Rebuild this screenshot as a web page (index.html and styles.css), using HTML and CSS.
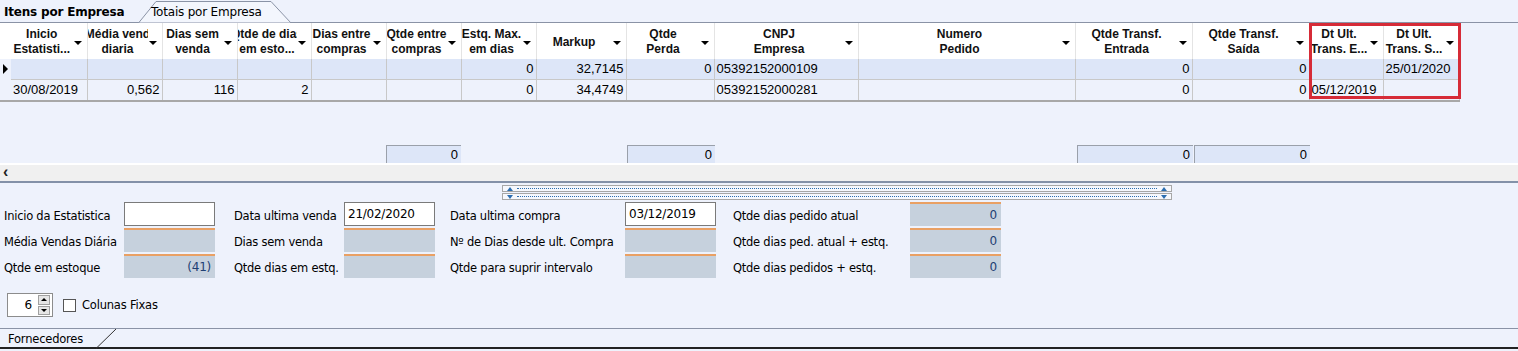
FILE: index.html
```html
<!DOCTYPE html>
<html lang="pt">
<head>
  <meta charset="UTF-8">
  <title>Itens por Empresa</title>
  <link rel="stylesheet" href="styles.css">
</head>
<body>

<div class="tabs">
  <div class="tab tab-active">Itens por Empresa</div>
  <div class="tab tab-other">
    <svg class="tab-shape" width="156" height="23" viewBox="0 0 156 23">
      <polygon points="0.5,23 18,1.5 133,1.5 153,23" fill="#f3f6fd" stroke="#8a93a6" stroke-width="1"/>
    </svg>
    <span>Totais por Empresa</span>
  </div>
</div>

<div class="grid-wrap">
  <table class="grid">
    <colgroup>
      <col style="width:11px"><col style="width:76px"><col style="width:75px"><col style="width:75px">
      <col style="width:74px"><col style="width:75px"><col style="width:75px"><col style="width:75px">
      <col style="width:90px"><col style="width:88px"><col style="width:144px"><col style="width:217px">
      <col style="width:117px"><col style="width:117px"><col style="width:74px"><col style="width:76px">
    </colgroup>
    <thead>
      <tr>
        <th class="ind"></th>
        <th><span>Inicio<br>Estatisti...</span></th>
        <th><span class="clip"><span>Média vend</span><span>diaria</span></span></th>
        <th><span>Dias sem<br>venda</span></th>
        <th><span class="clip"><span>Qtde de dias</span><span>em esto...</span></span></th>
        <th><span>Dias entre<br>compras</span></th>
        <th><span>Qtde entre<br>compras</span></th>
        <th><span>Estq. Max.<br>em dias</span></th>
        <th><span>Markup</span></th>
        <th><span>Qtde<br>Perda</span></th>
        <th><span>CNPJ<br>Empresa</span></th>
        <th><span>Numero<br>Pedido</span></th>
        <th><span>Qtde Transf.<br>Entrada</span></th>
        <th><span>Qtde Transf.<br>Saída</span></th>
        <th><span>Dt Ult.<br>Trans. E...</span></th>
        <th><span>Dt Ult.<br>Trans. S...</span></th>
      </tr>
    </thead>
    <tbody>
      <tr class="row-current">
        <td class="ind"><span class="pointer"></span></td>
        <td></td><td></td><td></td><td></td><td></td><td></td>
        <td class="num">0</td>
        <td class="num">32,7145</td>
        <td class="num">0</td>
        <td>05392152000109</td>
        <td></td>
        <td class="num">0</td>
        <td class="num">0</td>
        <td></td>
        <td>25/01/2020</td>
      </tr>
      <tr>
        <td class="ind"></td>
        <td>30/08/2019</td>
        <td class="num">0,562</td>
        <td class="num">116</td>
        <td class="num">2</td>
        <td></td><td></td>
        <td class="num">0</td>
        <td class="num">34,4749</td>
        <td></td>
        <td>05392152000281</td>
        <td></td>
        <td class="num">0</td>
        <td class="num">0</td>
        <td>05/12/2019</td>
        <td></td>
      </tr>
    </tbody>
  </table>

  <div class="mark"></div>

  <div class="totals">
    <div class="tot-gap" style="width:386px"></div>
    <div class="tot" style="width:75px">0</div>
    <div class="tot-gap" style="width:165px"></div>
    <div class="tot" style="width:88px">0</div>
    <div class="tot-gap" style="width:361px"></div>
    <div class="tot" style="width:116px">0</div>
    <div class="tot" style="width:116px">0</div>
  </div>
</div>

<div class="hscroll"><span class="arrow-left">&lsaquo;</span></div>

<div class="panel">
  <div class="splitter">
    <div class="split-bar"><span class="tri up"></span><span class="dots"></span><span class="tri up"></span></div>
    <div class="split-bar"><span class="tri down"></span><span class="dots"></span><span class="tri down"></span></div>
  </div>

  <div class="fields">
    <div class="fcol c1">
      <div class="frow"><label>Inicio da Estatistica</label><div class="box white"></div></div>
      <div class="frow"><label>Média Vendas Diária</label><div class="box ro"></div></div>
      <div class="frow"><label>Qtde em estoque</label><div class="box ro val">(41)</div></div>
    </div>
    <div class="fcol c2">
      <div class="frow"><label>Data ultima venda</label><div class="box white">21/02/2020</div></div>
      <div class="frow"><label>Dias sem venda</label><div class="box ro"></div></div>
      <div class="frow"><label>Qtde dias em estq.</label><div class="box ro"></div></div>
    </div>
    <div class="fcol c3">
      <div class="frow"><label>Data ultima compra</label><div class="box white">03/12/2019</div></div>
      <div class="frow"><label>Nº de Dias desde ult. Compra</label><div class="box ro"></div></div>
      <div class="frow"><label>Qtde para suprir intervalo</label><div class="box ro"></div></div>
    </div>
    <div class="fcol c4">
      <div class="frow"><label>Qtde dias pedido atual</label><div class="box ro val">0</div></div>
      <div class="frow"><label>Qtde dias ped. atual + estq.</label><div class="box ro val">0</div></div>
      <div class="frow"><label>Qtde dias pedidos + estq.</label><div class="box ro val">0</div></div>
    </div>
  </div>

  <div class="options">
    <div class="spin">
      <span class="spin-val">6</span>
      <div class="spin-btns">
        <span class="sb"><span class="tri-s up"></span></span>
        <span class="sb"><span class="tri-s down"></span></span>
      </div>
    </div>
    <span class="check"></span>
    <span class="check-label">Colunas Fixas</span>
  </div>
</div>

<div class="bottom-tabs">
  <div class="btab">
    <span>Fornecedores</span>
    <svg class="btab-shape" width="22" height="21" viewBox="0 0 22 21">
      <line x1="0" y1="20.5" x2="20" y2="1" stroke="#333" stroke-width="1"/>
    </svg>
  </div>
</div>

</body>
</html>
```

FILE: styles.css
```css
body {
  margin: 0;
  width: 1518px;
  height: 351px;
  overflow: hidden;
  background: #eef2fc;
  font-family: 'Liberation Sans', Arial, sans-serif;
  color: #000;
}

/* top tabs */
.tabs {
  height: 22px;
  display: flex;
  align-items: flex-end;
  border-bottom: 1px solid #8a93a6;
  background: #eef2fc;
}
.tab {
  height: 22px;
  line-height: 24px;
  font-size: 13px;
  position: relative;
}
.tab-active {
  font-family: 'DejaVu Sans', sans-serif;
  font-weight: bold;
  font-size: 12px;
  padding-left: 4px;
  width: 134px;
  letter-spacing: -0.2px;
}
.tab-other {
  width: 156px;
  font-family: 'DejaVu Sans', sans-serif;
  font-size: 12px;
  margin-bottom: -1px;
  height: 23px;
}
.tab-shape {
  position: absolute;
  left: 0;
  top: 0;
}
.tab-other span {
  position: relative;
  padding-left: 13px;
  letter-spacing: -0.2px;
}

/* grid */
.grid-wrap {
  height: 140px;
  position: relative;
  background: #eef2fc;
}
.grid {
  border-collapse: collapse;
  table-layout: fixed;
  width: 1459px;
  font-size: 13px;
}
.grid th {
  height: 34px;
  background: #fff;
  font-size: 12px;
  font-weight: bold;
  line-height: 15px;
  text-align: center;
  padding: 2px 14px 0 0;
  border-right: 1px solid #e4e4e4;
  white-space: nowrap;
  overflow: hidden;
  position: relative;
  color: #111;
}
.grid th::after {
  content: "";
  position: absolute;
  right: 5px;
  top: 18px;
  border-left: 4px solid transparent;
  border-right: 4px solid transparent;
  border-top: 4px solid #000;
}
.grid th.ind::after {
  display: none;
}
.grid th.ind {
  padding: 0;
  border-right: none;
}
.grid th .clip {
  display: flex;
  flex-direction: column;
  align-items: center;
  overflow: hidden;
}
.grid td {
  height: 20px;
  padding: 0 2px;
  border-right: 1px solid #c8c8c8;
  border-bottom: 1px solid #c8c8c8;
  white-space: nowrap;
  overflow: hidden;
  line-height: 20px;
}
.grid tbody tr:last-child td {
  border-bottom: 2px solid #a8a8a8;
}
.grid td.num {
  text-align: right;
}
.grid td.ind {
  border-right: none;
  border-bottom: none;
  padding: 0;
  position: relative;
  background: #eef2fc;
}
.row-current td {
  background: #dde6f8;
}
.pointer {
  display: block;
  margin-left: 3px;
  width: 0;
  height: 0;
  border-top: 5px solid transparent;
  border-bottom: 5px solid transparent;
  border-left: 5px solid #000;
}
.mark {
  position: absolute;
  left: 1309px;
  top: 0;
  width: 146px;
  height: 70px;
  border: 3px solid #d62b37;
}
.totals {
  position: absolute;
  left: 0;
  bottom: 0;
  display: flex;
  height: 18px;
}
.tot {
  background: #dde6f8;
  border-top: 1px solid #9aa0aa;
  border-left: 1px solid #9aa0aa;
  box-sizing: border-box;
  text-align: right;
  font-size: 13px;
  line-height: 17px;
  padding-right: 3px;
  margin-right: 1px;
}

/* horizontal scrollbar */
.hscroll {
  height: 16px;
  border-top: 2px solid #fff;
  background: #f0f0f0;
  border-bottom: 2px solid #8391a8;
}
.arrow-left {
  display: block;
  font-size: 16px;
  line-height: 13px;
  padding-left: 3px;
  font-weight: bold;
  color: #222;
}

/* lower panel */
.panel {
  height: 145px;
  background: #eef2fc;
}
.splitter {
  margin-left: 502px;
  width: 670px;
  padding-top: 2px;
  display: flex;
  flex-direction: column;
  gap: 1px;
}
.split-bar {
  height: 5px;
  border: 1px solid #a7a7a7;
  background: #f6f8fd;
  display: flex;
  align-items: center;
  padding: 0 4px;
  gap: 4px;
}
.dots {
  flex: 1;
  border-top: 1px dotted #2b6db0;
}
.tri {
  width: 0;
  height: 0;
  border-left: 3px solid transparent;
  border-right: 3px solid transparent;
}
.tri.up {
  border-bottom: 4px solid #2b6db0;
}
.tri.down {
  border-top: 4px solid #2b6db0;
}

.fields {
  display: flex;
  padding: 2px 0 0 4px;
  font-family: 'DejaVu Sans', sans-serif;
  font-size: 11.5px;
  letter-spacing: -0.25px;
}
.fcol {
  display: flex;
  flex-direction: column;
  gap: 2px;
}
.frow {
  display: flex;
  align-items: center;
  height: 24px;
}
.frow label {
  display: block;
  padding-top: 3px;
}
.c1 { width: 230px; }
.c1 label { width: 120px; }
.c2 { width: 216px; }
.c2 label { width: 110px; }
.c3 { width: 283px; }
.c3 label { width: 175px; }
.c4 label { width: 177px; }
.box {
  width: 91px;
  height: 24px;
  box-sizing: border-box;
  line-height: 22px;
  font-size: 12px;
  padding: 0 3px;
}
.box.white {
  background: #fff;
  border: 1px solid #7a7a7a;
}
.box.ro {
  background: #c6d1dd;
  border-top: 2px solid #e9a064;
}
.box.val {
  text-align: right;
  color: #1e3f73;
  padding-right: 4px;
}

.options {
  display: flex;
  align-items: center;
  padding: 15px 0 0 7px;
  font-family: 'DejaVu Sans', sans-serif;
  font-size: 11.5px;
  letter-spacing: -0.2px;
}
.spin {
  width: 46px;
  height: 24px;
  box-sizing: border-box;
  border: 1px solid #8c8c8c;
  background: #fff;
  display: flex;
  align-items: center;
  justify-content: flex-end;
}
.spin-val {
  font-size: 12px;
  padding-right: 6px;
}
.spin-btns {
  display: flex;
  flex-direction: column;
  width: 12px;
  height: 20px;
  margin-right: 2px;
  gap: 1px;
}
.sb {
  flex: 1;
  background: #e6e6e6;
  border: 1px solid #a0a0a0;
  display: flex;
  align-items: center;
  justify-content: center;
}
.tri-s {
  width: 0;
  height: 0;
  border-left: 3px solid transparent;
  border-right: 3px solid transparent;
}
.tri-s.up { border-bottom: 3px solid #000; }
.tri-s.down { border-top: 3px solid #000; }
.check {
  width: 11px;
  height: 11px;
  border: 1px solid #555;
  background: #fff;
  margin-left: 10px;
  margin-right: 6px;
}

/* bottom tabs */
.bottom-tabs {
  height: 21px;
  border-top: 1px solid #8a93a6;
  border-bottom: 2px solid #222;
  box-sizing: border-box;
}
.btab {
  display: flex;
  align-items: flex-end;
  height: 19px;
  font-family: 'DejaVu Sans', sans-serif;
  font-size: 11.5px;
  letter-spacing: -0.2px;
}
.btab span {
  padding-left: 8px;
  width: 88px;
  line-height: 17px;
}
.btab-shape {
  display: block;
  margin-bottom: -1px;
}
```
